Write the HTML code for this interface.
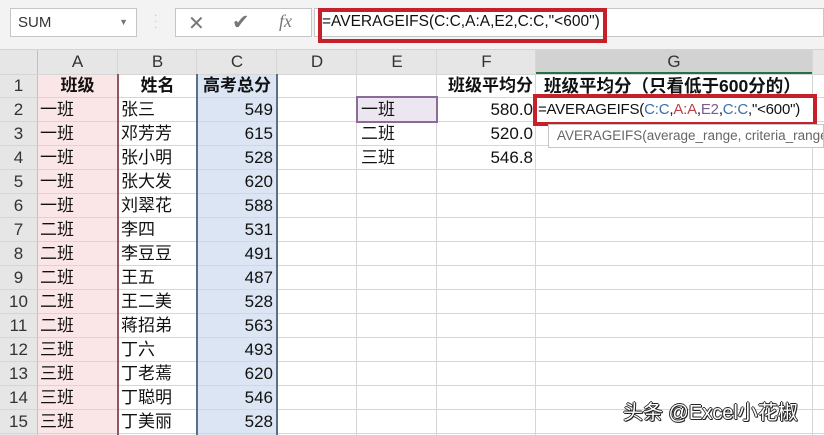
<!DOCTYPE html>
<html><head><meta charset="utf-8"><style>
*{margin:0;padding:0;box-sizing:border-box}
body{width:824px;height:435px;overflow:hidden;background:#fff;font-family:"Liberation Sans","Noto Sans CJK SC",sans-serif;position:relative}
.top{position:absolute;left:0;top:0;width:824px;height:50px;background:#f3f3f3;border-bottom:1px solid #d4d4d4}
.nb{position:absolute;left:10px;top:8px;width:127px;height:29px;background:#fff;border:1px solid #c6c6c6;font-size:15px;line-height:27px;padding-left:7px;color:#333}
.nb span{position:absolute;right:8px;top:0;font-size:9px;color:#777}
.fxb{position:absolute;left:175px;top:8px;width:137px;height:29px;background:#fff;border:1px solid #c6c6c6;color:#777}
.fm{position:absolute;left:314px;top:8px;width:510px;height:29px;background:#fff;border:1px solid #c6c6c6}
.red{position:absolute;border:4px solid #c8202a}
.vl{position:absolute;top:50px;width:1px;height:385px;background:#d6d6d6}
.hl{position:absolute;left:0;width:824px;height:1px;background:#d6d6d6}
.t{position:absolute;height:24px;line-height:24px;font-size:17px;color:#111;white-space:nowrap}
.rh{position:absolute;left:0;top:50px;width:37px;height:385px;background:#e6e6e6}
.ch{position:absolute;left:0;top:50px;width:824px;height:24px;background:#e6e6e6}
b{font-weight:bold}
.wm{position:absolute;left:623px;top:396px;font-size:20px;color:#fff;text-shadow:1px 1px 0 #222,-1px 0 0 #222,0 -1px 0 #222,1px 0 0 #222,0 1px 0 #222}
</style></head><body>
<div class="top">
<div class="nb">SUM<span>▼</span></div>
<div style="position:absolute;left:154px;top:13px;color:#bbb;font-size:10px;line-height:6px">·<br>·<br>·</div>
<div class="fxb"><span style="position:absolute;left:12px;top:2px;font-size:20px">✕</span><span style="position:absolute;left:56px;top:1px;font-size:21px">✔</span><span style="position:absolute;left:103px;top:2px;font-size:18px;font-family:'Liberation Serif',serif;font-style:italic">fx</span></div>
<div class="fm"><span style="position:absolute;left:7px;top:4px;font-size:15.5px;color:#111">=AVERAGEIFS(C:C,A:A,E2,C:C,"&lt;600")</span></div>
<div class="red" style="left:318px;top:8px;width:289px;height:35px"></div>
</div>
<div class="ch"></div>
<div style="position:absolute;left:536px;top:50px;width:276px;height:24px;background:#d2d2d2;border-bottom:2px solid #217346"></div>
<div class="rh"></div>
<div style="position:absolute;left:37px;top:74px;width:81px;height:361px;background:#fbe6e7"></div>
<div style="position:absolute;left:197px;top:74px;width:80px;height:361px;background:#dbe5f3"></div>
<div class="vl" style="left:37px;background:#c0c0c0"></div>
<div class="vl" style="left:117px"></div><div class="vl" style="left:196px"></div><div class="vl" style="left:276px"></div>
<div class="vl" style="left:356px"></div><div class="vl" style="left:436px"></div><div class="vl" style="left:535px"></div><div class="vl" style="left:812px"></div>
<div class="hl" style="top:74px"></div><div class="hl" style="top:97px"></div><div class="hl" style="top:121px"></div><div class="hl" style="top:145px"></div><div class="hl" style="top:169px"></div><div class="hl" style="top:193px"></div><div class="hl" style="top:217px"></div><div class="hl" style="top:241px"></div><div class="hl" style="top:265px"></div><div class="hl" style="top:289px"></div><div class="hl" style="top:313px"></div><div class="hl" style="top:337px"></div><div class="hl" style="top:361px"></div><div class="hl" style="top:385px"></div><div class="hl" style="top:409px"></div><div class="hl" style="top:433px"></div>
<div style="position:absolute;left:117px;top:74px;width:2px;height:361px;background:#8c5a5e"></div>
<div style="position:absolute;left:196px;top:74px;width:2px;height:361px;background:#5b7088"></div>
<div style="position:absolute;left:276px;top:74px;width:2px;height:361px;background:#5b7088"></div>
<div class="t" style="top:50px;left:37px;width:81px;text-align:center;color:#333">A</div>
<div class="t" style="top:50px;left:118px;width:79px;text-align:center;color:#333">B</div>
<div class="t" style="top:50px;left:197px;width:80px;text-align:center;color:#333">C</div>
<div class="t" style="top:50px;left:277px;width:80px;text-align:center;color:#333">D</div>
<div class="t" style="top:50px;left:357px;width:80px;text-align:center;color:#333">E</div>
<div class="t" style="top:50px;left:437px;width:99px;text-align:center;color:#333">F</div>
<div class="t" style="top:50px;left:536px;width:276px;text-align:center;color:#333">G</div>
<div class="t" style="top:74px;left:0;width:37px;text-align:center;color:#333">1</div>
<div class="t" style="top:74px;left:37px;width:81px;text-align:center"><b>班级</b></div>
<div class="t" style="top:74px;left:118px;width:79px;text-align:center"><b>姓名</b></div>
<div class="t" style="top:74px;left:197px;width:80px;text-align:center"><b>高考总分</b></div>
<div class="t" style="top:74px;left:437px;width:96px;text-align:right"><b>班级平均分</b></div>
<div class="t" style="top:74px;left:544px;font-size:17.5px"><b>班级平均分（只看低于600分的）</b></div>
<div style="position:absolute;left:356px;top:96px;width:82px;height:27px;background:#ece6f0;border:2px solid #8a6c97"></div>
<div class="t" style="top:98px;left:0;width:37px;text-align:center;color:#333">2</div>
<div class="t" style="top:122px;left:0;width:37px;text-align:center;color:#333">3</div>
<div class="t" style="top:146px;left:0;width:37px;text-align:center;color:#333">4</div>
<div class="t" style="top:170px;left:0;width:37px;text-align:center;color:#333">5</div>
<div class="t" style="top:194px;left:0;width:37px;text-align:center;color:#333">6</div>
<div class="t" style="top:218px;left:0;width:37px;text-align:center;color:#333">7</div>
<div class="t" style="top:242px;left:0;width:37px;text-align:center;color:#333">8</div>
<div class="t" style="top:266px;left:0;width:37px;text-align:center;color:#333">9</div>
<div class="t" style="top:290px;left:0;width:37px;text-align:center;color:#333">10</div>
<div class="t" style="top:314px;left:0;width:37px;text-align:center;color:#333">11</div>
<div class="t" style="top:338px;left:0;width:37px;text-align:center;color:#333">12</div>
<div class="t" style="top:362px;left:0;width:37px;text-align:center;color:#333">13</div>
<div class="t" style="top:386px;left:0;width:37px;text-align:center;color:#333">14</div>
<div class="t" style="top:410px;left:0;width:37px;text-align:center;color:#333">15</div>
<div class="t" style="top:98px;left:40px">一班</div><div class="t" style="top:98px;left:121px">张三</div><div class="t" style="top:98px;left:197px;width:76px;text-align:right">549</div>
<div class="t" style="top:122px;left:40px">一班</div><div class="t" style="top:122px;left:121px">邓芳芳</div><div class="t" style="top:122px;left:197px;width:76px;text-align:right">615</div>
<div class="t" style="top:146px;left:40px">一班</div><div class="t" style="top:146px;left:121px">张小明</div><div class="t" style="top:146px;left:197px;width:76px;text-align:right">528</div>
<div class="t" style="top:170px;left:40px">一班</div><div class="t" style="top:170px;left:121px">张大发</div><div class="t" style="top:170px;left:197px;width:76px;text-align:right">620</div>
<div class="t" style="top:194px;left:40px">一班</div><div class="t" style="top:194px;left:121px">刘翠花</div><div class="t" style="top:194px;left:197px;width:76px;text-align:right">588</div>
<div class="t" style="top:218px;left:40px">二班</div><div class="t" style="top:218px;left:121px">李四</div><div class="t" style="top:218px;left:197px;width:76px;text-align:right">531</div>
<div class="t" style="top:242px;left:40px">二班</div><div class="t" style="top:242px;left:121px">李豆豆</div><div class="t" style="top:242px;left:197px;width:76px;text-align:right">491</div>
<div class="t" style="top:266px;left:40px">二班</div><div class="t" style="top:266px;left:121px">王五</div><div class="t" style="top:266px;left:197px;width:76px;text-align:right">487</div>
<div class="t" style="top:290px;left:40px">二班</div><div class="t" style="top:290px;left:121px">王二美</div><div class="t" style="top:290px;left:197px;width:76px;text-align:right">528</div>
<div class="t" style="top:314px;left:40px">二班</div><div class="t" style="top:314px;left:121px">蒋招弟</div><div class="t" style="top:314px;left:197px;width:76px;text-align:right">563</div>
<div class="t" style="top:338px;left:40px">三班</div><div class="t" style="top:338px;left:121px">丁六</div><div class="t" style="top:338px;left:197px;width:76px;text-align:right">493</div>
<div class="t" style="top:362px;left:40px">三班</div><div class="t" style="top:362px;left:121px">丁老蔫</div><div class="t" style="top:362px;left:197px;width:76px;text-align:right">620</div>
<div class="t" style="top:386px;left:40px">三班</div><div class="t" style="top:386px;left:121px">丁聪明</div><div class="t" style="top:386px;left:197px;width:76px;text-align:right">546</div>
<div class="t" style="top:410px;left:40px">三班</div><div class="t" style="top:410px;left:121px">丁美丽</div><div class="t" style="top:410px;left:197px;width:76px;text-align:right">528</div>
<div class="t" style="top:98px;left:361px">一班</div>
<div class="t" style="top:122px;left:361px">二班</div>
<div class="t" style="top:146px;left:361px">三班</div>
<div class="t" style="top:98px;left:437px;width:96px;text-align:right">580.0</div>
<div class="t" style="top:122px;left:437px;width:96px;text-align:right">520.0</div>
<div class="t" style="top:146px;left:437px;width:96px;text-align:right">546.8</div>
<div style="position:absolute;left:537px;top:98px;width:276px;height:24px;background:#fff;font-size:15px;letter-spacing:-0.2px;line-height:23px;padding-left:1px;color:#111;white-space:nowrap">=AVERAGEIFS(<span style="color:#3a6ea8">C:C</span>,<span style="color:#b5434b">A:A</span>,<span style="color:#7b5a96">E2</span>,<span style="color:#3a6ea8">C:C</span>,"&lt;600")</div>
<div class="red" style="left:533px;top:94px;width:284px;height:32px"></div>
<div style="position:absolute;left:548px;top:124px;width:276px;height:24px;background:#fff;border:1px solid #c6c6c6;font-size:13.5px;line-height:22px;padding-left:8px;color:#666;white-space:nowrap;overflow:hidden">AVERAGEIFS(average_range, criteria_range</div>
<div class="wm">头条 @Excel小花椒</div>
</body></html>
